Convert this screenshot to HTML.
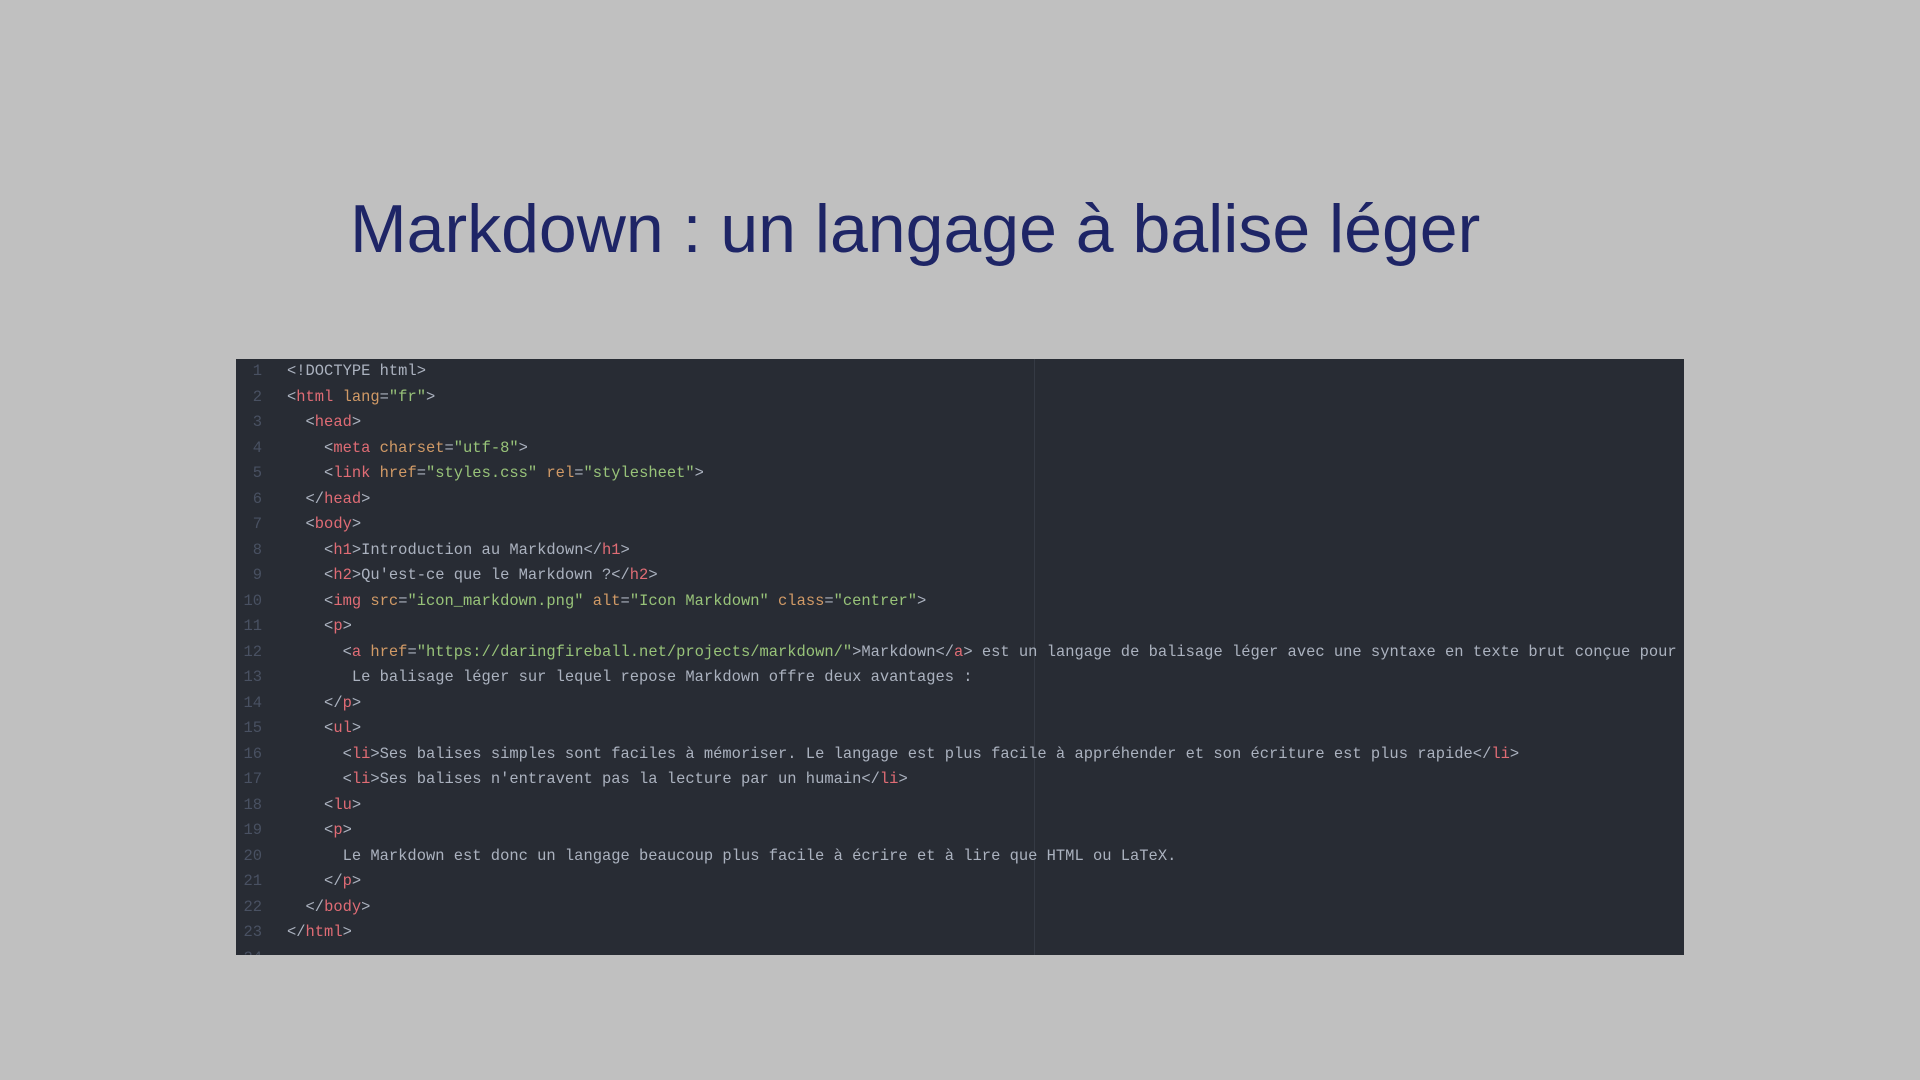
<!DOCTYPE html>
<html><head><meta charset="utf-8"><style>
body{margin:0;width:1920px;height:1080px;background:#c0c0c0;position:relative;overflow:hidden}
h1{position:absolute;left:350px;top:195px;margin:0;font:400 68px/1 "Liberation Sans",sans-serif;color:#1e2566;white-space:nowrap}
#ed{position:absolute;left:236px;top:359px;width:1448px;height:596px;background:#282c34;overflow:hidden}
#vl{position:absolute;left:798px;top:0;width:1px;height:100%;background:#353a44}
.l{position:absolute;left:0;height:25.5px;line-height:25.5px;font:15.45px/25.5px "Liberation Mono",monospace;white-space:pre;color:#abb2bf}
.n{display:inline-block;width:26px;text-align:right;color:#495162;margin-right:25px}
.t{color:#e06c75}.a{color:#d19a66}.s{color:#98c379}
</style></head><body>
<h1>Markdown : un langage à balise léger</h1>
<div id="ed"><div id="vl"></div>
<div class="l" style="top:0px"><span class="n">1</span>&lt;!DOCTYPE html&gt;</div>
<div class="l" style="top:25.5px"><span class="n">2</span>&lt;<span class="t">html</span> <span class="a">lang</span>=<span class="s">"fr"</span>&gt;</div>
<div class="l" style="top:51px"><span class="n">3</span>  &lt;<span class="t">head</span>&gt;</div>
<div class="l" style="top:76.5px"><span class="n">4</span>    &lt;<span class="t">meta</span> <span class="a">charset</span>=<span class="s">"utf-8"</span>&gt;</div>
<div class="l" style="top:102px"><span class="n">5</span>    &lt;<span class="t">link</span> <span class="a">href</span>=<span class="s">"styles.css"</span> <span class="a">rel</span>=<span class="s">"stylesheet"</span>&gt;</div>
<div class="l" style="top:127.5px"><span class="n">6</span>  &lt;/<span class="t">head</span>&gt;</div>
<div class="l" style="top:153px"><span class="n">7</span>  &lt;<span class="t">body</span>&gt;</div>
<div class="l" style="top:178.5px"><span class="n">8</span>    &lt;<span class="t">h1</span>&gt;Introduction au Markdown&lt;/<span class="t">h1</span>&gt;</div>
<div class="l" style="top:204px"><span class="n">9</span>    &lt;<span class="t">h2</span>&gt;Qu'est-ce que le Markdown ?&lt;/<span class="t">h2</span>&gt;</div>
<div class="l" style="top:229.5px"><span class="n">10</span>    &lt;<span class="t">img</span> <span class="a">src</span>=<span class="s">"icon_markdown.png"</span> <span class="a">alt</span>=<span class="s">"Icon Markdown"</span> <span class="a">class</span>=<span class="s">"centrer"</span>&gt;</div>
<div class="l" style="top:255px"><span class="n">11</span>    &lt;<span class="t">p</span>&gt;</div>
<div class="l" style="top:280.5px"><span class="n">12</span>      &lt;<span class="t">a</span> <span class="a">href</span>=<span class="s">"https://daringfireball.net/projects/markdown/"</span>&gt;Markdown&lt;/<span class="t">a</span>&gt; est un langage de balisage léger avec une syntaxe en texte brut conçue pour</div>
<div class="l" style="top:306px"><span class="n">13</span>       Le balisage léger sur lequel repose Markdown offre deux avantages :</div>
<div class="l" style="top:331.5px"><span class="n">14</span>    &lt;/<span class="t">p</span>&gt;</div>
<div class="l" style="top:357px"><span class="n">15</span>    &lt;<span class="t">ul</span>&gt;</div>
<div class="l" style="top:382.5px"><span class="n">16</span>      &lt;<span class="t">li</span>&gt;Ses balises simples sont faciles à mémoriser. Le langage est plus facile à appréhender et son écriture est plus rapide&lt;/<span class="t">li</span>&gt;</div>
<div class="l" style="top:408px"><span class="n">17</span>      &lt;<span class="t">li</span>&gt;Ses balises n'entravent pas la lecture par un humain&lt;/<span class="t">li</span>&gt;</div>
<div class="l" style="top:433.5px"><span class="n">18</span>    &lt;<span class="t">lu</span>&gt;</div>
<div class="l" style="top:459px"><span class="n">19</span>    &lt;<span class="t">p</span>&gt;</div>
<div class="l" style="top:484.5px"><span class="n">20</span>      Le Markdown est donc un langage beaucoup plus facile à écrire et à lire que HTML ou LaTeX.</div>
<div class="l" style="top:510px"><span class="n">21</span>    &lt;/<span class="t">p</span>&gt;</div>
<div class="l" style="top:535.5px"><span class="n">22</span>  &lt;/<span class="t">body</span>&gt;</div>
<div class="l" style="top:561px"><span class="n">23</span>&lt;/<span class="t">html</span>&gt;</div>
<div class="l" style="top:586.5px"><span class="n">24</span></div>
</div>
</body></html>
